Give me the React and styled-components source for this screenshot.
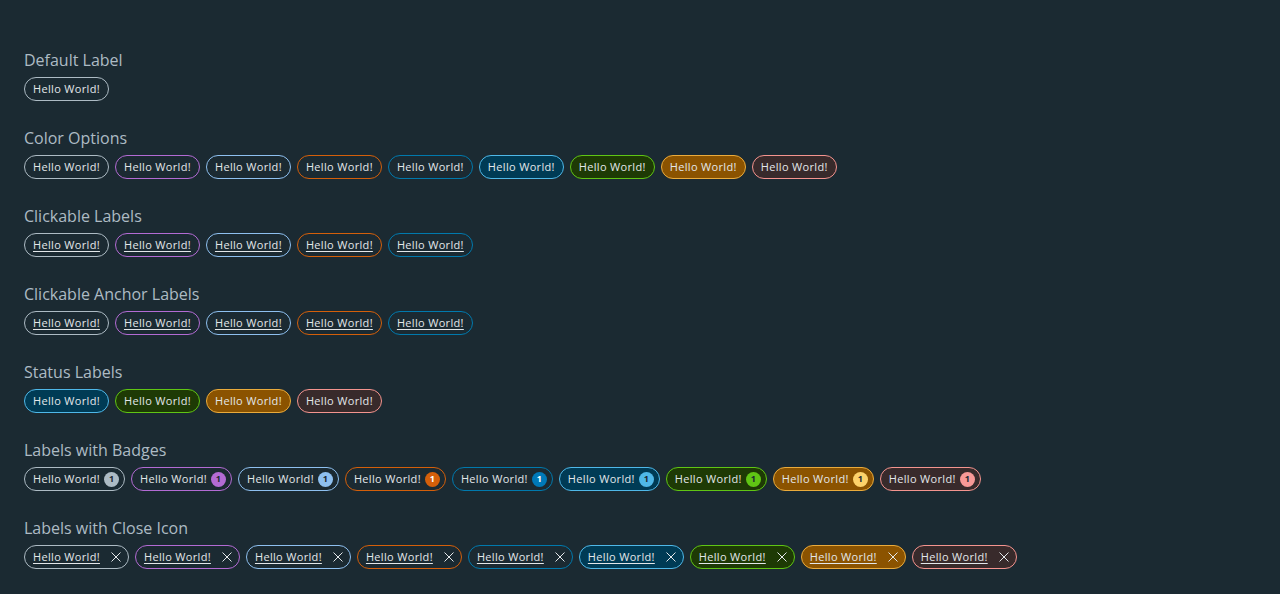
import React from 'react';
import styled, { createGlobalStyle } from 'styled-components';

const GlobalStyle = createGlobalStyle`
  html, body {
    margin: 0;
    padding: 0;
    background: #1b2a32;
  }
  body {
    font-family: "Open Sans", "Liberation Sans", sans-serif;
  }
`;

/****** colour options, Clarity dark look */
const COLORS = {
  gray: { border: '#adbbc4', bg: 'transparent', badge: '#adbbc4', badgeText: '#1b2a32' },
  purple: { border: '#b36bd4', bg: 'transparent', badge: '#b36bd4', badgeText: '#1b2a32' },
  blue: { border: '#8ec0f0', bg: 'transparent', badge: '#8ec0f0', badgeText: '#1b2a32' },
  orange: { border: '#d45f0a', bg: 'transparent', badge: '#d45f0a', badgeText: '#fff' },
  lightBlue: { border: '#0079ad', bg: 'transparent', badge: '#0079b8', badgeText: '#fff' },
  info: { border: '#4fb8e8', bg: '#003b55', badge: '#4fb8e8', badgeText: '#1b2a32' },
  success: { border: '#60c514', bg: '#1e3a05', badge: '#60c514', badgeText: '#1b2a32' },
  warning: { border: '#eaab3c', bg: '#8b5300', badge: '#fdd26a', badgeText: '#1b2a32' },
  danger: { border: '#f4948f', bg: '#382a2b', badge: '#f89997', badgeText: '#1b2a32' },
};

const ALL = ['gray', 'purple', 'blue', 'orange', 'lightBlue', 'info', 'success', 'warning', 'danger'];
const CLICKABLE = ['gray', 'purple', 'blue', 'orange', 'lightBlue'];
const STATUS = ['info', 'success', 'warning', 'danger'];

const Page = styled.div`
  padding: 48px 24px 24px;
  display: flex;
  flex-direction: column;
  gap: 25px;
`;

const Section = styled.section`
  display: flex;
  flex-direction: column;
  gap: 5px;
`;

const Heading = styled.h3`
  margin: 0;
  font-size: 16px;
  line-height: 24px;
  font-weight: 400;
  color: #adbbc4;
`;

const Row = styled.div`
  display: flex;
  gap: 6px;
`;

const Label = styled.span`
  box-sizing: border-box;
  height: 24px;
  margin: 0;
  display: inline-flex;
  align-items: center;
  padding: 0 ${(p) => (p.$trail ? p.$trail : 8)}px 1px 8px;
  border: 1px solid ${(p) => COLORS[p.$color].border};
  background: ${(p) => COLORS[p.$color].bg};
  border-radius: 12px;
  color: #e3e7ea;
  font-family: "Open Sans", "Liberation Sans", sans-serif;
  font-size: 11px;
  line-height: 16px;
  letter-spacing: 0.33px;
  white-space: nowrap;
  text-decoration: none;
  cursor: ${(p) => (p.$clickable ? 'pointer' : 'default')};
`;

const Text = styled.span`
  text-decoration: ${(p) => (p.$underline ? 'underline' : 'none')};
  text-underline-offset: 2px;
`;

const Badge = styled.span`
  margin: 1px 0 0 4px;
  width: 15px;
  height: 15px;
  border-radius: 50%;
  background: ${(p) => COLORS[p.$color].badge};
  color: ${(p) => COLORS[p.$color].badgeText};
  font-size: 9px;
  font-weight: 700;
  letter-spacing: 0;
  display: inline-flex;
  align-items: center;
  justify-content: center;
`;

const CloseButton = styled.button`
  margin: 1px 0 0 11px;
  padding: 0;
  border: none;
  background: none;
  display: inline-flex;
  color: #e3e7ea;
  cursor: pointer;
`;

const CloseIcon = () => (
  <svg width="10" height="10" viewBox="0 0 10 10">
    <path d="M0.5 0.5 L9.5 9.5 M9.5 0.5 L0.5 9.5" stroke="currentColor" strokeWidth="1" fill="none" />
  </svg>
);

const HELLO = 'Hello World!';

export default function App() {
  return (
    <>
      <GlobalStyle />
      <Page>
        <Section>
          <Heading>Default Label</Heading>
          <Row>
            <Label $color="gray"><Text>{HELLO}</Text></Label>
          </Row>
        </Section>

        <Section>
          <Heading>Color Options</Heading>
          <Row>
            {ALL.map((c) => (
              <Label key={c} $color={c}><Text>{HELLO}</Text></Label>
            ))}
          </Row>
        </Section>

        <Section>
          <Heading>Clickable Labels</Heading>
          <Row>
            {CLICKABLE.map((c) => (
              <Label key={c} as="button" $color={c} $clickable>
                <Text $underline>{HELLO}</Text>
              </Label>
            ))}
          </Row>
        </Section>

        <Section>
          <Heading>Clickable Anchor Labels</Heading>
          <Row>
            {CLICKABLE.map((c) => (
              <Label key={c} as="a" href="#" $color={c} $clickable>
                <Text $underline>{HELLO}</Text>
              </Label>
            ))}
          </Row>
        </Section>

        <Section>
          <Heading>Status Labels</Heading>
          <Row>
            {STATUS.map((c) => (
              <Label key={c} $color={c}><Text>{HELLO}</Text></Label>
            ))}
          </Row>
        </Section>

        <Section>
          <Heading>Labels with Badges</Heading>
          <Row>
            {ALL.map((c) => (
              <Label key={c} $color={c} $trail={5}>
                <Text>{HELLO}</Text>
                <Badge $color={c}>1</Badge>
              </Label>
            ))}
          </Row>
        </Section>

        <Section>
          <Heading>Labels with Close Icon</Heading>
          <Row>
            {ALL.map((c) => (
              <Label key={c} $color={c} $trail={7}>
                <Text $underline>{HELLO}</Text>
                <CloseButton aria-label="close"><CloseIcon /></CloseButton>
              </Label>
            ))}
          </Row>
        </Section>
      </Page>
    </>
  );
}
